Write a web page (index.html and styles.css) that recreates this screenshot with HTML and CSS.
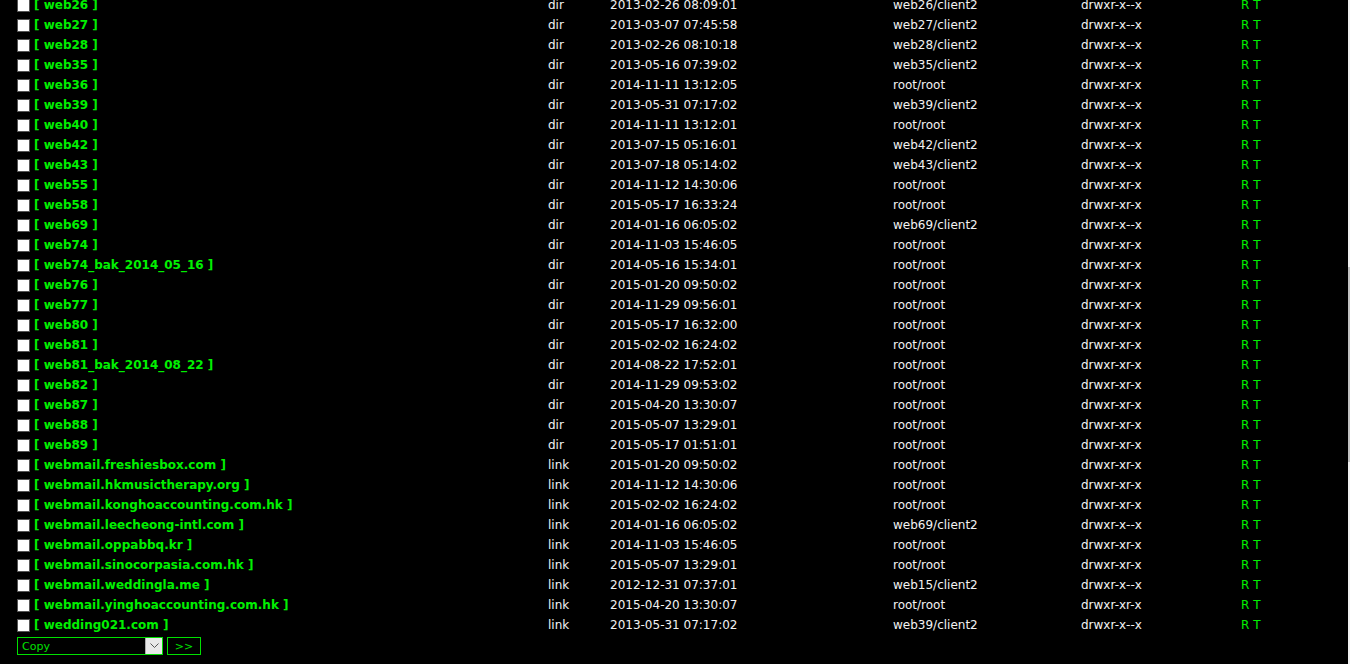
FILE: index.html
```html
<!DOCTYPE html>
<html>
<head>
<meta charset="utf-8">
<link rel="stylesheet" href="styles.css">
</head>
<body>
<div class="page">
<div class="list">
<div class="row"><span class="cb"></span><span class="name">[ web26 ]</span><span class="type">dir</span><span class="date">2013-02-26 08:09:01</span><span class="owner">web26/client2</span><span class="perm">drwxr-x--x</span><span class="act">R T</span></div>
<div class="row"><span class="cb"></span><span class="name">[ web27 ]</span><span class="type">dir</span><span class="date">2013-03-07 07:45:58</span><span class="owner">web27/client2</span><span class="perm">drwxr-x--x</span><span class="act">R T</span></div>
<div class="row"><span class="cb"></span><span class="name">[ web28 ]</span><span class="type">dir</span><span class="date">2013-02-26 08:10:18</span><span class="owner">web28/client2</span><span class="perm">drwxr-x--x</span><span class="act">R T</span></div>
<div class="row"><span class="cb"></span><span class="name">[ web35 ]</span><span class="type">dir</span><span class="date">2013-05-16 07:39:02</span><span class="owner">web35/client2</span><span class="perm">drwxr-x--x</span><span class="act">R T</span></div>
<div class="row"><span class="cb"></span><span class="name">[ web36 ]</span><span class="type">dir</span><span class="date">2014-11-11 13:12:05</span><span class="owner">root/root</span><span class="perm">drwxr-xr-x</span><span class="act">R T</span></div>
<div class="row"><span class="cb"></span><span class="name">[ web39 ]</span><span class="type">dir</span><span class="date">2013-05-31 07:17:02</span><span class="owner">web39/client2</span><span class="perm">drwxr-x--x</span><span class="act">R T</span></div>
<div class="row"><span class="cb"></span><span class="name">[ web40 ]</span><span class="type">dir</span><span class="date">2014-11-11 13:12:01</span><span class="owner">root/root</span><span class="perm">drwxr-xr-x</span><span class="act">R T</span></div>
<div class="row"><span class="cb"></span><span class="name">[ web42 ]</span><span class="type">dir</span><span class="date">2013-07-15 05:16:01</span><span class="owner">web42/client2</span><span class="perm">drwxr-x--x</span><span class="act">R T</span></div>
<div class="row"><span class="cb"></span><span class="name">[ web43 ]</span><span class="type">dir</span><span class="date">2013-07-18 05:14:02</span><span class="owner">web43/client2</span><span class="perm">drwxr-x--x</span><span class="act">R T</span></div>
<div class="row"><span class="cb"></span><span class="name">[ web55 ]</span><span class="type">dir</span><span class="date">2014-11-12 14:30:06</span><span class="owner">root/root</span><span class="perm">drwxr-xr-x</span><span class="act">R T</span></div>
<div class="row"><span class="cb"></span><span class="name">[ web58 ]</span><span class="type">dir</span><span class="date">2015-05-17 16:33:24</span><span class="owner">root/root</span><span class="perm">drwxr-xr-x</span><span class="act">R T</span></div>
<div class="row"><span class="cb"></span><span class="name">[ web69 ]</span><span class="type">dir</span><span class="date">2014-01-16 06:05:02</span><span class="owner">web69/client2</span><span class="perm">drwxr-x--x</span><span class="act">R T</span></div>
<div class="row"><span class="cb"></span><span class="name">[ web74 ]</span><span class="type">dir</span><span class="date">2014-11-03 15:46:05</span><span class="owner">root/root</span><span class="perm">drwxr-xr-x</span><span class="act">R T</span></div>
<div class="row"><span class="cb"></span><span class="name">[ web74_bak_2014_05_16 ]</span><span class="type">dir</span><span class="date">2014-05-16 15:34:01</span><span class="owner">root/root</span><span class="perm">drwxr-xr-x</span><span class="act">R T</span></div>
<div class="row"><span class="cb"></span><span class="name">[ web76 ]</span><span class="type">dir</span><span class="date">2015-01-20 09:50:02</span><span class="owner">root/root</span><span class="perm">drwxr-xr-x</span><span class="act">R T</span></div>
<div class="row"><span class="cb"></span><span class="name">[ web77 ]</span><span class="type">dir</span><span class="date">2014-11-29 09:56:01</span><span class="owner">root/root</span><span class="perm">drwxr-xr-x</span><span class="act">R T</span></div>
<div class="row"><span class="cb"></span><span class="name">[ web80 ]</span><span class="type">dir</span><span class="date">2015-05-17 16:32:00</span><span class="owner">root/root</span><span class="perm">drwxr-xr-x</span><span class="act">R T</span></div>
<div class="row"><span class="cb"></span><span class="name">[ web81 ]</span><span class="type">dir</span><span class="date">2015-02-02 16:24:02</span><span class="owner">root/root</span><span class="perm">drwxr-xr-x</span><span class="act">R T</span></div>
<div class="row"><span class="cb"></span><span class="name">[ web81_bak_2014_08_22 ]</span><span class="type">dir</span><span class="date">2014-08-22 17:52:01</span><span class="owner">root/root</span><span class="perm">drwxr-xr-x</span><span class="act">R T</span></div>
<div class="row"><span class="cb"></span><span class="name">[ web82 ]</span><span class="type">dir</span><span class="date">2014-11-29 09:53:02</span><span class="owner">root/root</span><span class="perm">drwxr-xr-x</span><span class="act">R T</span></div>
<div class="row"><span class="cb"></span><span class="name">[ web87 ]</span><span class="type">dir</span><span class="date">2015-04-20 13:30:07</span><span class="owner">root/root</span><span class="perm">drwxr-xr-x</span><span class="act">R T</span></div>
<div class="row"><span class="cb"></span><span class="name">[ web88 ]</span><span class="type">dir</span><span class="date">2015-05-07 13:29:01</span><span class="owner">root/root</span><span class="perm">drwxr-xr-x</span><span class="act">R T</span></div>
<div class="row"><span class="cb"></span><span class="name">[ web89 ]</span><span class="type">dir</span><span class="date">2015-05-17 01:51:01</span><span class="owner">root/root</span><span class="perm">drwxr-xr-x</span><span class="act">R T</span></div>
<div class="row"><span class="cb"></span><span class="name">[ webmail.freshiesbox.com ]</span><span class="type">link</span><span class="date">2015-01-20 09:50:02</span><span class="owner">root/root</span><span class="perm">drwxr-xr-x</span><span class="act">R T</span></div>
<div class="row"><span class="cb"></span><span class="name">[ webmail.hkmusictherapy.org ]</span><span class="type">link</span><span class="date">2014-11-12 14:30:06</span><span class="owner">root/root</span><span class="perm">drwxr-xr-x</span><span class="act">R T</span></div>
<div class="row"><span class="cb"></span><span class="name">[ webmail.konghoaccounting.com.hk ]</span><span class="type">link</span><span class="date">2015-02-02 16:24:02</span><span class="owner">root/root</span><span class="perm">drwxr-xr-x</span><span class="act">R T</span></div>
<div class="row"><span class="cb"></span><span class="name">[ webmail.leecheong-intl.com ]</span><span class="type">link</span><span class="date">2014-01-16 06:05:02</span><span class="owner">web69/client2</span><span class="perm">drwxr-x--x</span><span class="act">R T</span></div>
<div class="row"><span class="cb"></span><span class="name">[ webmail.oppabbq.kr ]</span><span class="type">link</span><span class="date">2014-11-03 15:46:05</span><span class="owner">root/root</span><span class="perm">drwxr-xr-x</span><span class="act">R T</span></div>
<div class="row"><span class="cb"></span><span class="name">[ webmail.sinocorpasia.com.hk ]</span><span class="type">link</span><span class="date">2015-05-07 13:29:01</span><span class="owner">root/root</span><span class="perm">drwxr-xr-x</span><span class="act">R T</span></div>
<div class="row"><span class="cb"></span><span class="name">[ webmail.weddingla.me ]</span><span class="type">link</span><span class="date">2012-12-31 07:37:01</span><span class="owner">web15/client2</span><span class="perm">drwxr-x--x</span><span class="act">R T</span></div>
<div class="row"><span class="cb"></span><span class="name">[ webmail.yinghoaccounting.com.hk ]</span><span class="type">link</span><span class="date">2015-04-20 13:30:07</span><span class="owner">root/root</span><span class="perm">drwxr-xr-x</span><span class="act">R T</span></div>
<div class="row"><span class="cb"></span><span class="name">[ wedding021.com ]</span><span class="type">link</span><span class="date">2013-05-31 07:17:02</span><span class="owner">web39/client2</span><span class="perm">drwxr-x--x</span><span class="act">R T</span></div>
</div>
<div class="controls">
<div class="select"><span class="sel-text">Copy</span><span class="sel-arrow"><svg width="9" height="6" viewBox="0 0 9 6"><path d="M0.5 0.5 L4.5 4.5 L8.5 0.5" fill="none" stroke="#555" stroke-width="1"/></svg></span></div>
<div class="btn">&gt;&gt;</div>
</div>
</div>
<div class="scrollbar"><div class="thumb"></div></div>
</body>
</html>
```

FILE: styles.css
```css
html, body {
  margin: 0;
  padding: 0;
  background: #000;
  overflow: hidden;
}
body {
  font-family: "DejaVu Sans", Verdana, sans-serif;
  font-size: 12px;
  color: #f2f2f2;
}
.page {
  margin-top: -5px;
  padding-left: 17px;
}
.row {
  display: grid;
  grid-template-columns: 17px 514px 62px 283px 188px 160px 80px;
  height: 20px;
  align-items: center;
  white-space: nowrap;
}
.cb {
  width: 11px;
  height: 11px;
  background: #fff;
  border: 1px solid #555;
}
.name {
  color: #00f000;
  font-weight: bold;
  font-size: 12px;
}
.act {
  color: #00f000;
}
.controls {
  display: flex;
  gap: 4px;
  margin-top: 2px;
}
.select {
  width: 144px;
  height: 16px;
  border: 1px solid #00e000;
  display: flex;
  align-items: center;
  justify-content: space-between;
  color: #00e000;
  font-size: 11px;
}
.sel-text {
  padding-left: 4px;
}
.sel-arrow {
  width: 16px;
  height: 16px;
  background: #e8e8e8;
  border-left: 1px solid #aaa;
  display: flex;
  align-items: center;
  justify-content: center;
}
.btn {
  width: 32px;
  height: 16px;
  border: 1px solid #00e000;
  color: #00e000;
  font-size: 11px;
  display: flex;
  align-items: center;
  justify-content: center;
}
.scrollbar {
  position: fixed;
  top: 0;
  right: 0;
  width: 2px;
  height: 100%;
  background: #f0f0f0;
}
.thumb {
  margin-top: 267px;
  height: 195px;
  background: #c2c2c2;
}
```
